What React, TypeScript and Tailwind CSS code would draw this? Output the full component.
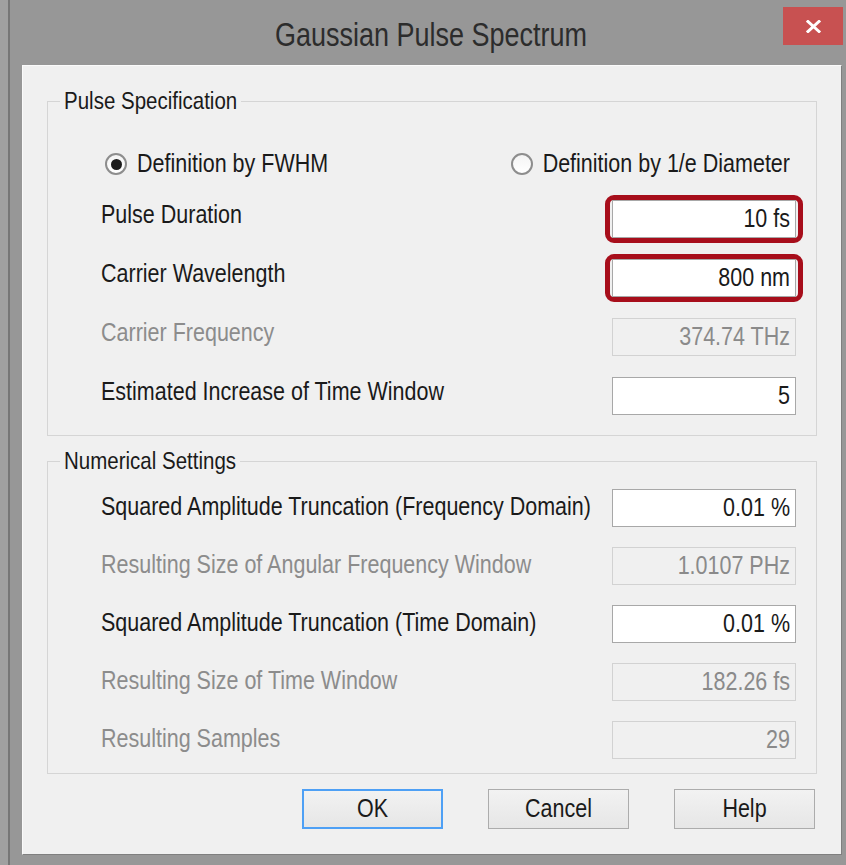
import React from "react";

type Row = { label: string; value: string; disabled?: boolean; marked?: boolean };

const pulseRows: Row[] = [
  { label: "Pulse Duration", value: "10 fs", marked: true },
  { label: "Carrier Wavelength", value: "800 nm", marked: true },
  { label: "Carrier Frequency", value: "374.74 THz", disabled: true },
  { label: "Estimated Increase of Time Window", value: "5" },
];

const numericRows: Row[] = [
  { label: "Squared Amplitude Truncation (Frequency Domain)", value: "0.01 %" },
  { label: "Resulting Size of Angular Frequency Window", value: "1.0107 PHz", disabled: true },
  { label: "Squared Amplitude Truncation (Time Domain)", value: "0.01 %" },
  { label: "Resulting Size of Time Window", value: "182.26 fs", disabled: true },
  { label: "Resulting Samples", value: "29", disabled: true },
];

// the dialog font is drawn a bit taller than it is wide
function Tall({ children }: { children: React.ReactNode }) {
  return <span className="inline-block scale-y-[1.2] whitespace-pre">{children}</span>;
}

function Field({ value, disabled }: { value: string; disabled?: boolean }) {
  return (
    <div
      className={`flex h-[38px] w-[184px] items-center justify-end border pr-[5px] ${
        disabled
          ? "border-[#d2d2d2] bg-[#f0f0f0] text-[#8a8a8a]"
          : "border-[#a8a8a8] bg-white text-[#1a1a1a]"
      }`}
    >
      <Tall>{value}</Tall>
    </div>
  );
}

function FieldRow({ row, low }: { row: Row; low?: boolean }) {
  return (
    <div className="flex h-[38px] items-start justify-between">
      <div
        className={`leading-[30px] ${low ? "pt-[3px]" : ""} ${
          row.disabled ? "text-[#8c8c8c]" : "text-[#1a1a1a]"
        }`}
      >
        <Tall>{row.label}</Tall>
      </div>
      {row.marked ? (
        <div className="-mx-[7px] -my-[5px] rounded-[9px] border-[5px] border-[#a70e1b] px-[2px]">
          <Field value={row.value} />
        </div>
      ) : (
        <Field value={row.value} disabled={row.disabled} />
      )}
    </div>
  );
}

function Radio({ label, checked }: { label: string; checked?: boolean }) {
  return (
    <div className="flex items-center gap-[10px]">
      <div className="flex h-[22px] w-[22px] items-center justify-center rounded-full border-2 border-[#8d8d8d] bg-gradient-to-b from-[#f4f4f4] to-white">
        {checked && <div className="h-[11px] w-[11px] rounded-full bg-[#1b1b1b]" />}
      </div>
      <Tall>{label}</Tall>
    </div>
  );
}

function Group({
  title,
  className,
  children,
}: {
  title: string;
  className?: string;
  children: React.ReactNode;
}) {
  return (
    <fieldset className={`border border-[#d5d5d5] ${className ?? ""}`}>
      <legend className="ml-[12px] px-[4px] text-[20.5px] leading-[24px] text-[#1a1a1a]">
        <Tall>{title}</Tall>
      </legend>
      {children}
    </fieldset>
  );
}

function Button({ label, focused }: { label: string; focused?: boolean }) {
  return (
    <button
      className={`flex h-[40px] w-[141px] items-center justify-center bg-gradient-to-b from-[#f2f2f2] to-[#e6e6e6] text-[#1a1a1a] ${
        focused ? "border-2 border-[#4ea0f5]" : "border border-[#acacac]"
      }`}
    >
      <Tall>{label}</Tall>
    </button>
  );
}

export default function App() {
  return (
    <div className="h-[865px] w-[846px] bg-[#a0a0a0] pl-[8px] font-['Liberation_Sans',Arial,sans-serif] text-[21.5px]">
      <div className="flex h-full flex-col border-l-2 border-[#767676] bg-[#979797]">
        {/* title bar */}
        <div className="relative flex h-[65px] shrink-0 items-center justify-center pl-[6px] pt-[6px]">
          <span className="text-[27px] text-[#2c2c2c]">
            <Tall>Gaussian Pulse Spectrum</Tall>
          </span>
          <div className="absolute right-[3px] top-[7px] flex h-[38px] w-[60px] items-center justify-center bg-[#c85151]">
            <svg width="15" height="13" viewBox="0 0 15 13">
              <path d="M2 1.5 L13 11.5 M13 1.5 L2 11.5" stroke="white" strokeWidth="3" strokeLinecap="square" />
            </svg>
          </div>
        </div>

        {/* client area */}
        <div className="mb-[10px] ml-[12px] mr-[4px] flex flex-1 flex-col border border-b-[#7f7f7f] border-l-[#fafafa] border-r-[#7f7f7f] border-t-[#fafafa] bg-[#f0f0f0] px-[24px] pt-[23px]">
          <Group title="Pulse Specification">
            <div className="flex flex-col gap-[21px] pb-[20px] pl-[53px] pr-[20px] pt-[36px]">
              <div className="flex h-[30px] items-center justify-between pl-[4px] pr-[6px] text-[#1a1a1a]">
                <Radio label="Definition by FWHM" checked />
                <Radio label="Definition by 1/e Diameter" />
              </div>
              {pulseRows.map((r) => (
                <FieldRow key={r.label} row={r} />
              ))}
            </div>
          </Group>

          <Group title="Numerical Settings" className="mt-[13px]">
            <div className="flex flex-col gap-[20px] pb-[14px] pl-[53px] pr-[20px] pt-[16px]">
              {numericRows.map((r) => (
                <FieldRow key={r.label} row={r} low />
              ))}
            </div>
          </Group>

          <div className="flex justify-end gap-[45px] pr-[2px] pt-[15px]">
            <Button label="OK" focused />
            <Button label="Cancel" />
            <Button label="Help" />
          </div>
        </div>
      </div>
    </div>
  );
}
